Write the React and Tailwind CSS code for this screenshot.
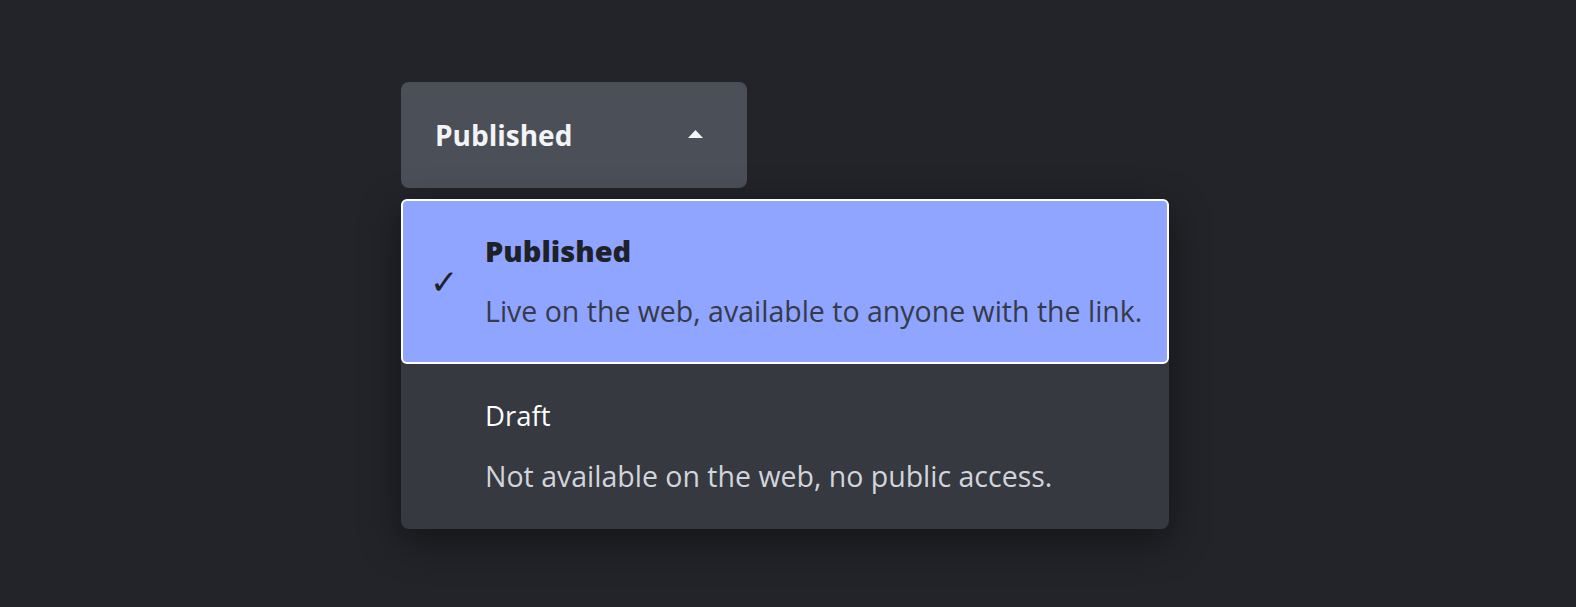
import { useState } from 'react';

const options = [
  { value: 'published', label: 'Published', desc: 'Live on the web, available to anyone with the link.' },
  { value: 'draft', label: 'Draft', desc: 'Not available on the web, no public access.' },
];

export default function App() {
  const [selected, setSelected] = useState('published');
  const current = options.find(o => o.value === selected);

  return (
    <div className="min-h-[607px] w-full bg-[#222429] pt-[82px] pl-[401px]" style={{ fontFamily: '"Open Sans", "Noto Sans", sans-serif' }}>
      <button className="flex h-[106px] w-[346px] items-center justify-between rounded-lg bg-[#4b5058] pl-[34px] pr-[44px] text-[28px] font-bold text-[#f3f4f6]">
        <span>{current.label}</span>
        <svg width="15" height="8" viewBox="0 0 15 8" className="mt-[-2px]">
          <path d="M7.5 0 L15 8 L0 8 Z" fill="#f3f4f6" />
        </svg>
      </button>

      <div className="mt-[11px] w-[768px] rounded-lg bg-[#363940] shadow-[0_12px_40px_rgba(0,0,0,0.45)]">
        {options.map(o => {
          const active = o.value === selected;
          return (
            <div key={o.value} onClick={() => setSelected(o.value)}
              className={`flex cursor-pointer items-center rounded-md border-2 pt-8 pb-[33px] ${active ? 'border-white bg-[#8fa5ff]' : 'border-transparent'}`}>
              <div className="w-[82px] shrink-0 pl-[27px] text-[34px] leading-none text-[#1f2128]">{active ? '✓' : ''}</div>
              <div className="flex flex-col gap-6">
                <span className={`leading-9 ${active ? 'text-[29px] font-extrabold text-[#1f2128]' : 'text-[27.5px] text-white'}`}>{o.label}</span>
                <span className={`text-[28.5px] leading-9 ${active ? 'text-[#363a4a]' : 'text-[#d1d5db]'}`}>{o.desc}</span>
              </div>
            </div>
          );
        })}
      </div>
    </div>
  );
}
